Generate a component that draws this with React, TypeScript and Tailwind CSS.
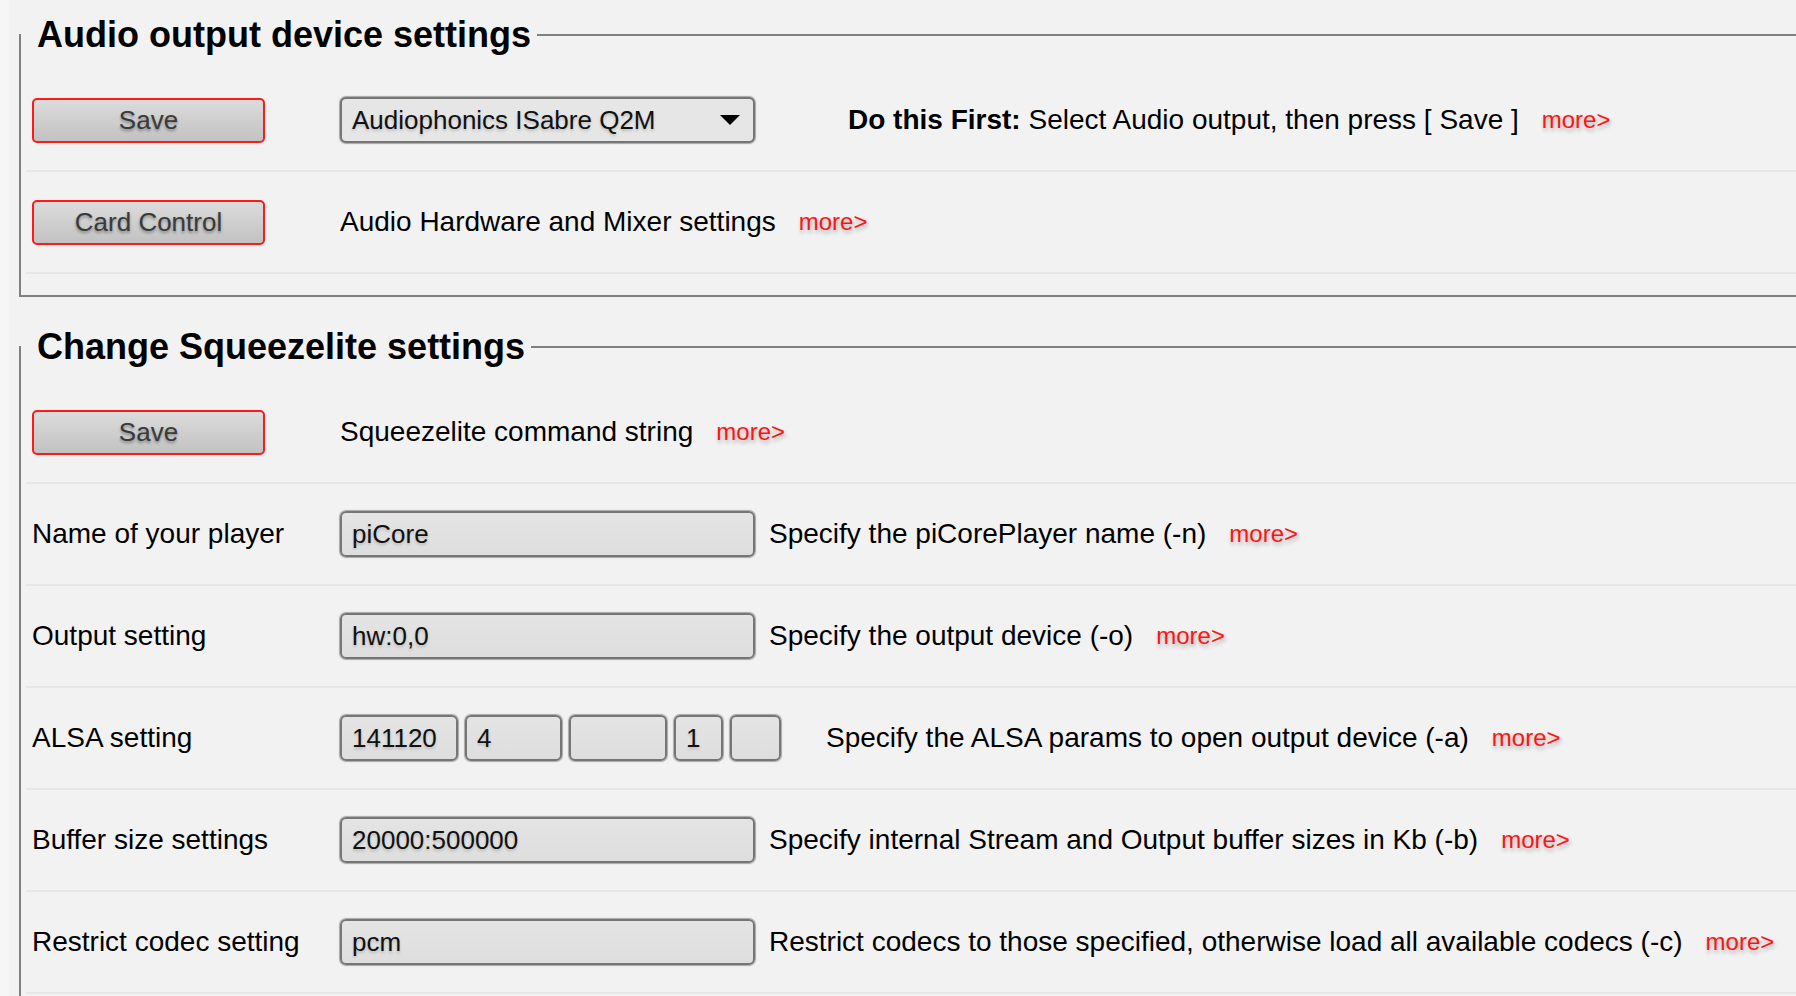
import type { ReactNode } from "react";

function More({ className = "ml-[23px]" }: { className?: string }) {
  return (
    <a
      href="#"
      className={`${className} shrink-0 text-[24px] text-[#ff1414] [text-shadow:1px_3px_4px_rgba(0,0,0,0.28)]`}
    >
      more&gt;
    </a>
  );
}

function Button({ children }: { children: ReactNode }) {
  return (
    <button className="w-[233px] h-[45px] shrink-0 rounded-[5px] border-2 border-[#ff1a1a] bg-linear-to-b from-[#dcdcdc] to-[#c2c2c2] text-[26px] text-[#3a3a3a] [text-shadow:0_2px_3px_rgba(0,0,0,0.35)]">
      {children}
    </button>
  );
}

function Field({ value, width }: { value: string; width: string }) {
  return (
    <input
      readOnly
      value={value}
      className={`${width} h-[46px] shrink-0 rounded-[6px] border-2 border-[#767676] bg-linear-to-b from-[#e4e4e4] to-[#dedede] pl-[10px] text-[26px] text-[#111] shadow-[0_0_1px_1px_#a8a8a8] outline-none [text-shadow:0_2px_3px_rgba(0,0,0,0.18)]`}
    />
  );
}

function Row({ children }: { children: ReactNode }) {
  return (
    <div className="flex items-center h-[102px] ml-[5px] pl-[6px] border-b-2 border-[#e6e6e6] text-[28px] text-black whitespace-nowrap">
      {children}
    </div>
  );
}

function Label({ children }: { children?: ReactNode }) {
  return <div className="w-[308px] shrink-0">{children}</div>;
}

function Section({ title, className, children }: { title: string; className: string; children: ReactNode }) {
  return (
    <fieldset className={`${className} w-[1840px] border-2 border-[#808080] pt-[15px] pb-[21px]`}>
      <legend className="pl-[16px] pr-[6px] text-[36px] leading-[41px] font-bold text-black">
        {title}
      </legend>
      {children}
    </fieldset>
  );
}

export default function App() {
  return (
    <div className="flex min-h-screen font-['Liberation_Sans',Arial,sans-serif]">
      <div className="w-[9px] shrink-0 bg-[#f6f6f6]" />
      <main className="flex-1 overflow-hidden bg-[#f2f2f2] pl-[10px] pb-10">
        <Section title="Audio output device settings" className="mt-[14px]">
          <Row>
            <Label>
              <Button>Save</Button>
            </Label>
            <div className="flex items-center justify-between w-[415px] h-[46px] shrink-0 rounded-[6px] border-2 border-[#767676] bg-[#e6e6e6] pl-[10px] pr-[13px] text-[26px] text-[#111] shadow-[0_0_1px_1px_#a8a8a8] [text-shadow:0_2px_3px_rgba(0,0,0,0.18)]">
              <span>Audiophonics ISabre Q2M</span>
              <svg width="20" height="10" viewBox="0 0 20 10">
                <path d="M0 0 H20 L10 10 Z" fill="#000" />
              </svg>
            </div>
            <span className="ml-[93px]">
              <b>Do this First:</b> Select Audio output, then press [ Save ]
            </span>
            <More />
          </Row>
          <Row>
            <Label>
              <Button>Card Control</Button>
            </Label>
            <span>Audio Hardware and Mixer settings</span>
            <More />
          </Row>
        </Section>

        <Section title="Change Squeezelite settings" className="mt-[29px]">
          <Row>
            <Label>
              <Button>Save</Button>
            </Label>
            <span>Squeezelite command string</span>
            <More />
          </Row>
          <Row>
            <Label>Name of your player</Label>
            <Field value="piCore" width="w-[415px]" />
            <span className="ml-[14px]">Specify the piCorePlayer name (-n)</span>
            <More />
          </Row>
          <Row>
            <Label>Output setting</Label>
            <Field value="hw:0,0" width="w-[415px]" />
            <span className="ml-[14px]">Specify the output device (-o)</span>
            <More />
          </Row>
          <Row>
            <Label>ALSA setting</Label>
            <div className="flex gap-[7px]">
              <Field value="141120" width="w-[118px]" />
              <Field value="4" width="w-[97px]" />
              <Field value="" width="w-[98px]" />
              <Field value="1" width="w-[49px]" />
              <Field value="" width="w-[51px]" />
            </div>
            <span className="ml-[45px]">Specify the ALSA params to open output device (-a)</span>
            <More />
          </Row>
          <Row>
            <Label>Buffer size settings</Label>
            <Field value="20000:500000" width="w-[415px]" />
            <span className="ml-[14px]">Specify internal Stream and Output buffer sizes in Kb (-b)</span>
            <More />
          </Row>
          <Row>
            <Label>Restrict codec setting</Label>
            <Field value="pcm" width="w-[415px]" />
            <span className="ml-[14px]">
              Restrict codecs to those specified, otherwise load all available codecs (-c)
            </span>
            <More />
          </Row>
        </Section>
      </main>
    </div>
  );
}
